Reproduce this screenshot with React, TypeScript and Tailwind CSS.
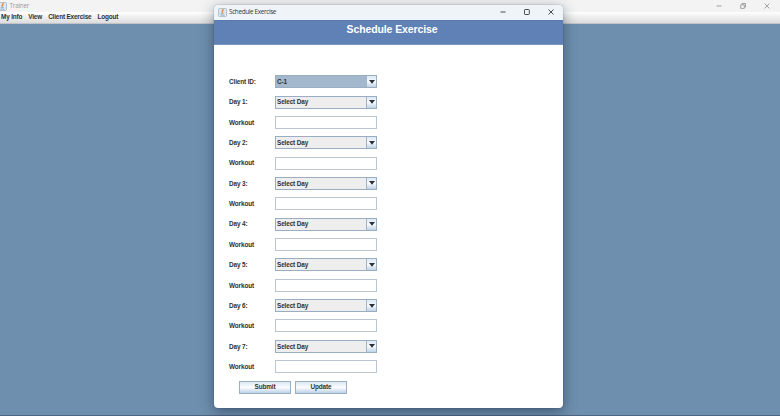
const days = [1, 2, 3, 4, 5, 6, 7];

function JavaIcon() {
  return (
    <svg viewBox="0 0 9 9" className="size-[9px] shrink-0">
      <rect x="0.5" y="0.5" width="8" height="8" rx="1" fill="#dce6ee" stroke="#a9b6c1" strokeWidth="0.8" />
      <path d="M4.9 1.2C5.7 2.3 3.5 2.8 4.5 4.6" fill="none" stroke="#e8833a" strokeWidth="1.4" />
      <path d="M2.7 5.4H5.7M2.4 7.1H6.4" fill="none" stroke="#7fa3c4" strokeWidth="0.8" />
    </svg>
  );
}

function WindowControls({ restore = false }: { restore?: boolean }) {
  return (
    <svg viewBox="0 0 56 8" className="h-2 w-14 shrink-0" fill="none" stroke="currentColor" strokeWidth="0.9">
      <path d="M1.5 4H6.5M49.5 1.5L54.5 6.5M54.5 1.5L49.5 6.5" />
      {restore ? (
        <path d="M25.7 2.8H29.3V6.4H25.7ZM27 2.5V1.5H30.5V5.2H29.5" />
      ) : (
        <rect x="25.5" y="1.5" width="4.8" height="5" rx="0.7" />
      )}
    </svg>
  );
}

function Label({ text }: { text: string }) {
  return <span className="w-[46px] shrink-0 pt-[1px] whitespace-nowrap">{text}</span>;
}

function SelectRow({ label, value, active = false }: { label: string; value: string; active?: boolean }) {
  return (
    <div className="flex h-[20.36px] items-center">
      <Label text={label} />
      <div className={`flex h-[13px] w-[102px] border border-[#9aaec1] ${active ? "bg-[#a3b8cc]" : "bg-[#eeeeee]"}`}>
        <span className="flex flex-1 items-center pt-[1px] pl-[1px]">{value}</span>
        <span className="flex w-[10px] items-center justify-center border-l border-[#9fb4c8] bg-linear-to-b from-[#dce8f4] via-[#f6fafd] to-[#bfd3e6]">
          <svg viewBox="0 0 6 4" className="h-[4px] w-[6px]"><path d="M0 0H6L3 3.8Z" fill="#2b3036" /></svg>
        </span>
      </div>
    </div>
  );
}

function InputRow() {
  return (
    <div className="flex h-[20.36px] items-center">
      <Label text="Workout" />
      <div className="h-[13px] w-[101.5px] border border-[#bac6d2] bg-white" />
    </div>
  );
}

function Button({ text }: { text: string }) {
  return (
    <div className="flex h-[13px] w-[52px] items-center justify-center border border-[#9bafc2] bg-linear-to-b from-[#dce8f3] via-[#fafcfe] to-[#bdd1e4] pt-[1px]">
      {text}
    </div>
  );
}

export default function App() {
  return (
    <div className="relative flex h-[416px] w-[780px] flex-col overflow-hidden bg-[#6e8fae] font-['Liberation_Sans',Arial,sans-serif] text-[6.4px] leading-none font-bold tracking-[-0.12px] text-[#303030]">
      <div className="flex h-3 shrink-0 items-center justify-between bg-[#f3f3f3] pr-[9px] text-[#9b9b9b]">
        <div className="-ml-[2px] flex items-center gap-[2.5px]">
          <JavaIcon />
          <span className="font-['Open_Sans',sans-serif] text-[6.3px] font-normal tracking-[-0.2px]">Trainer</span>
        </div>
        <WindowControls restore />
      </div>
      <div className="flex h-[11.5px] shrink-0 items-center gap-[6.1px] border-b border-[#c1c5c9] bg-linear-to-b from-white to-[#dcdcdc] pl-[1px] tracking-[-0.17px]">
        <span>My Info</span>
        <span>View</span>
        <span>Client Exercise</span>
        <span>Logout</span>
      </div>
      <div className="flex-1" />
      <div className="h-px shrink-0 bg-[#4c6580]" />

      <div className="absolute top-[5px] left-[214px] flex h-[403px] w-[349px] flex-col overflow-hidden rounded-[4px] bg-white shadow-[0_4px_14px_rgba(20,35,55,0.5),0_0_1px_rgba(20,35,55,0.8)]">
        <div className="flex h-[14.5px] shrink-0 items-center justify-between bg-[#eff4f9] pr-[8px] pl-[3.5px] text-[#36383b]">
          <div className="flex items-center gap-[2.5px]">
            <JavaIcon />
            <span className="font-['Open_Sans',sans-serif] text-[6.4px] font-normal tracking-[-0.36px]">Schedule Exercise</span>
          </div>
          <WindowControls />
        </div>
        <div className="flex h-[25.5px] shrink-0 justify-center border-t border-b border-t-[#577cad] border-b-[#7895c3] bg-[#6081b6] pt-[3px] pl-[7px] text-[10.5px] tracking-[-0.12px] text-white">
          Schedule Exercise
        </div>
        <div className="flex flex-col pt-[26.5px] pl-[15px]">
          <SelectRow label="Client ID:" value="C-1" active />
          {days.map((day) => (
            <div key={day}>
              <SelectRow label={`Day ${day}:`} value="Select Day" />
              <InputRow />
            </div>
          ))}
          <div className="flex h-[20.36px] items-center gap-[4px] pl-[10px]">
            <Button text="Submit" />
            <Button text="Update" />
          </div>
        </div>
      </div>
    </div>
  );
}
